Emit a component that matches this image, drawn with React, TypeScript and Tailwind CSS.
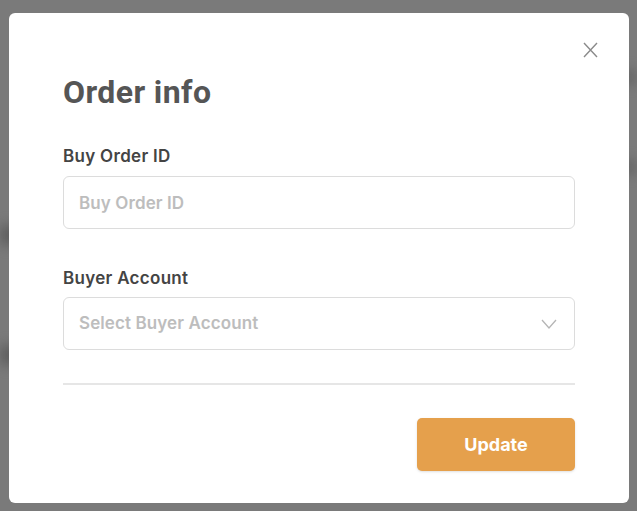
import { useState } from 'react'

export default function App() {
  const [orderId, setOrderId] = useState('')

  return (
    <div className="relative h-[511px] w-full overflow-hidden bg-[#7a7a7a]">
      {/* blurred page behind the overlay */}
      <div className="absolute inset-0 blur-[6px]">
        <div className="absolute left-0 top-[225px] h-[20px] w-[30px] bg-[#5f5f5f]" />
        <div className="absolute left-0 top-[345px] h-[20px] w-[30px] bg-[#5f5f5f]" />
        <div className="absolute right-0 top-[70px] h-[14px] w-[20px] bg-[#666]" />
        <div className="absolute right-0 top-[160px] h-[14px] w-[20px] bg-[#666]" />
      </div>

      <div className="relative ml-[9px] mt-[13px] flex h-[490px] w-[620px] flex-col rounded-[6px] bg-white px-[54px] pt-[59px] font-['Inter',sans-serif]">
        <button className="absolute right-[31px] top-[29px] text-[#8a8a8a]" aria-label="Close">
          <svg width="15" height="16" viewBox="0 0 15 16" fill="none" stroke="currentColor" strokeWidth="1.4">
            <path d="M1 1 L14 15 M14 1 L1 15" />
          </svg>
        </button>

        <h2 className="font-['Roboto',sans-serif] text-[32px] font-bold leading-[40px] tracking-[0.4px] text-[#555]">Order info</h2>

        <label className="mt-[32px] text-[17px] font-semibold leading-[24px] tracking-[0.3px] text-[#444]">Buy Order ID</label>
        <input
          value={orderId}
          onChange={(e) => setOrderId(e.target.value)}
          placeholder="Buy Order ID"
          className="mt-[8px] h-[53px] w-full rounded-[6px] border border-[#dcdcdc] px-[15px] text-[17px] font-semibold tracking-[0.1px] text-[#444] outline-none placeholder:text-[#bdbdbd]"
        />

        <label className="mt-[37px] text-[17px] font-semibold leading-[24px] tracking-[0.3px] text-[#444]">Buyer Account</label>
        <div className="mt-[7px] flex h-[53px] w-full items-center justify-between rounded-[6px] border border-[#dcdcdc] px-[15px]">
          <span className="text-[17px] font-semibold tracking-[0.1px] text-[#bdbdbd]">Select Buyer Account</span>
          <svg width="16" height="10" viewBox="0 0 16 10" fill="none" stroke="#b5b5b5" strokeWidth="1.3" className="mr-[2px]">
            <path d="M1 1 L8 9 L15 1" />
          </svg>
        </div>

        <div className="mt-[33px] h-[2px] w-full bg-[#e6e6e6]" />

        <div className="mt-[33px] flex justify-end">
          <button className="h-[53px] w-[158px] rounded-[5px] bg-[#e5a04c] text-[18px] font-bold text-white shadow-sm">
            Update
          </button>
        </div>
      </div>
    </div>
  )
}
